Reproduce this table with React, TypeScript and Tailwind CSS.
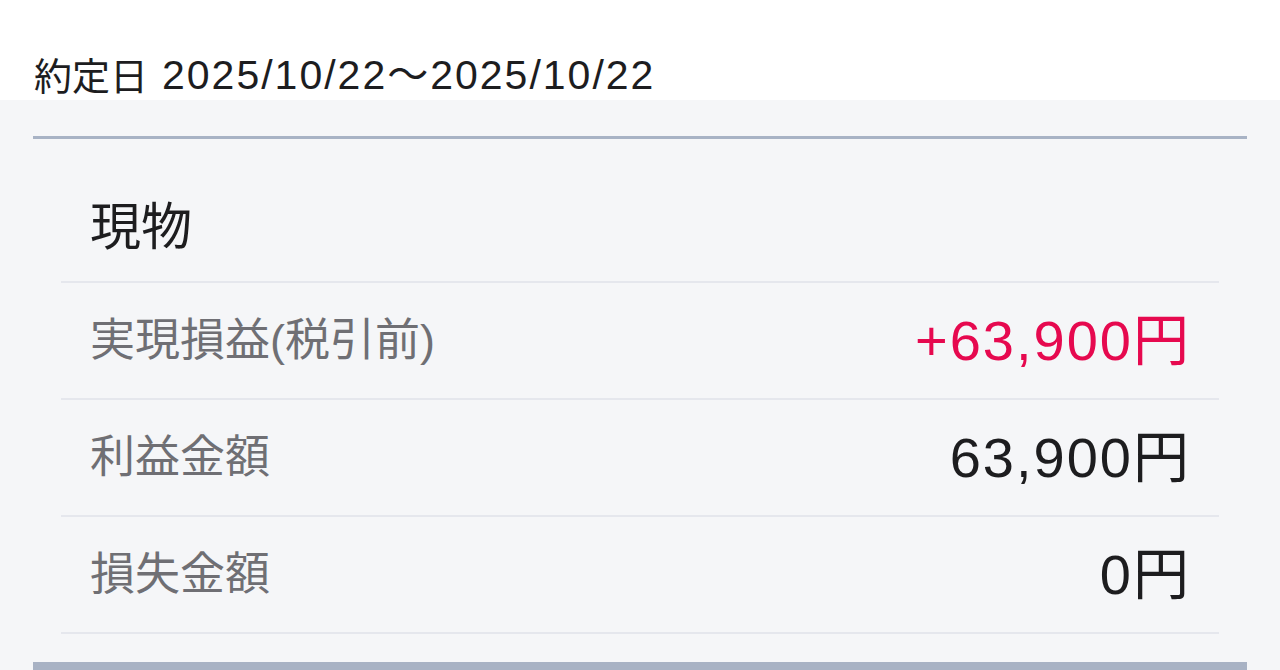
import React from "react";

const font = { fontFamily: '"Liberation Sans", "Noto Sans CJK JP", sans-serif' };

function Row({ label, value, red }: { label: string; value: string; red?: boolean }) {
  return (
    <div className="flex h-[117px] items-center justify-between border-b-2 border-[#e5e7ed] pl-[29px] pr-[28px]">
      <span className="text-[45px] leading-none text-[#6f6f74]">{label}</span>
      <span className={`text-[56px] leading-none tracking-[2px] ${red ? "text-[#e6094f]" : "text-[#1d1d1f]"}`}>{value}</span>
    </div>
  );
}

export default function App() {
  return (
    <div className="h-[670px] w-[1280px] overflow-hidden bg-[#f5f6f8]" style={font}>
      <div className="flex h-[100px] items-end bg-white pb-[4px] pl-[34px] text-[#1d1d1f]">
        <span className="text-[38px] leading-none">約定日</span>
        <span className="ml-[14px] text-[41px] leading-none tracking-[2px]">2025/10/22〜2025/10/22</span>
      </div>
      <div className="mx-[33px] mt-[36px] border-t-[3px] border-[#a8b3c5]">
        <div className="mx-[28px]">
          <div className="flex h-[144px] items-center border-b-2 border-[#e5e7ed] pl-[29px] pt-[34px]">
            <span className="text-[51px] leading-none text-[#1d1d1f]">現物</span>
          </div>
          <Row label="実現損益(税引前)" value="+63,900円" red />
          <Row label="利益金額" value="63,900円" />
          <Row label="損失金額" value="0円" />
        </div>
        <div className="mt-[28px] h-[10px] bg-[#a8b2c4]" />
      </div>
    </div>
  );
}
